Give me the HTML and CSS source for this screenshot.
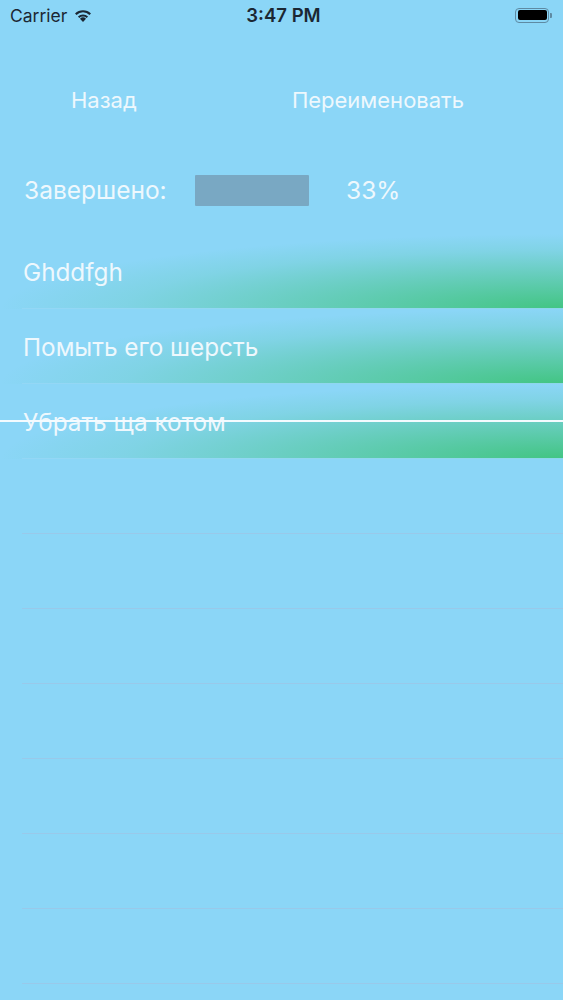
FILE: index.html
```html
<!DOCTYPE html>
<html lang="ru">
<head>
  <meta charset="UTF-8">
  <meta name="viewport" content="width=device-width, initial-scale=1.0">
  <title>Список</title>
  <link rel="stylesheet" href="styles.css">
</head>
<body>
  <div class="status-bar">
    <div class="status-left">
      <span>Carrier</span>
      <svg class="wifi" width="20" height="14" viewBox="0 0 18 13">
        <path d="M9 13 L6.2 9.9 A4.2 4.2 0 0 1 11.8 9.9 Z" fill="#1b2733"/>
        <path d="M4.3 7.9 A6.9 6.9 0 0 1 13.7 7.9 L12.4 9.3 A5 5 0 0 0 5.6 9.3 Z" fill="#1b2733"/>
        <path d="M1.6 5.1 A10.6 10.6 0 0 1 16.4 5.1 L15 6.5 A8.6 8.6 0 0 0 3 6.5 Z" fill="#1b2733"/>
      </svg>
    </div>
    <div class="status-time">3:47 PM</div>
    <div class="status-right">
      <div class="battery"><div class="battery-fill"></div></div>
      <div class="battery-nub"></div>
    </div>
  </div>

  <div class="nav">
    <button class="nav-btn">Назад</button>
    <button class="nav-btn nav-right">Переименовать</button>
  </div>

  <div class="progress-row">
    <span class="progress-label">Завершено:</span>
    <div class="progress-bar"></div>
    <span class="progress-value">33%</span>
  </div>

  <div class="tasks">
    <div class="task filled">Ghddfgh</div>
    <div class="task filled">Помыть его шерсть</div>
    <div class="task filled done">Убрать ща котом</div>
    <div class="task"></div>
    <div class="task"></div>
    <div class="task"></div>
    <div class="task"></div>
    <div class="task"></div>
    <div class="task"></div>
    <div class="task"></div>
  </div>
</body>
</html>
```

FILE: styles.css
```css
* { box-sizing: border-box; margin: 0; padding: 0; }
html, body { height: 100%; }
body {
  font-family: Inter, "Liberation Sans", sans-serif;
  background-color: #8bd6f7;
  color: #eef8fd;
  overflow: hidden;
}

/* status bar */
.status-bar {
  display: grid;
  grid-template-columns: 1fr auto 1fr;
  align-items: center;
  height: 30px;
  padding: 0 10px;
  color: #1b2733;
  font-size: 17.5px;
}
.status-left { display: flex; align-items: center; gap: 6px; }
.status-time { font-weight: 600; font-size: 18.5px; padding-left: 4px; }
.status-right { display: flex; align-items: center; justify-content: flex-end; padding-right: 1px; }
.battery {
  width: 34px;
  height: 15px;
  border: 1.5px solid #5e8aa3;
  border-radius: 4px;
  padding: 1.5px;
}
.battery-fill { width: 100%; height: 100%; background: #000; border-radius: 2px; }
.battery-nub { width: 2px; height: 5px; background: #5e8aa3; border-radius: 0 1px 1px 0; margin-left: 1px; }

/* nav */
.nav {
  display: flex;
  align-items: center;
  margin-top: 56px;
  height: 28px;
  padding-left: 71px;
  padding-right: 99px;
}
.nav-btn {
  background: none;
  border: none;
  color: #eef8fd;
  font-family: inherit;
  font-size: 22px;
}
.nav-right { margin-left: auto; }

/* progress */
.progress-row {
  display: flex;
  align-items: center;
  margin-top: 60px;
  height: 32px;
  padding-left: 24px;
}
.progress-label { width: 171px; font-size: 24.5px; }
.progress-bar {
  width: 114px;
  height: 31px;
  background-color: #79a8c3;
  border-radius: 1px;
}
.progress-value { margin-left: 37px; font-size: 24.5px; }

/* tasks */
.tasks { margin-top: 28px; }
.task {
  position: relative;
  display: flex;
  align-items: center;
  height: 75px;
  padding-left: 23px;
  font-size: 24.3px;
}
.task::after {
  content: "";
  position: absolute;
  left: 22px;
  right: 0;
  bottom: 0;
  height: 1.5px;
  background: rgba(160, 195, 228, 0.7);
}
.task.filled {
  background:
    radial-gradient(ellipse 100% 100% at 100% 100%, rgba(62, 196, 124, 0.95) 0%, rgba(64, 196, 126, 0.55) 40%, rgba(64, 196, 126, 0.15) 78%, rgba(64, 196, 126, 0) 100%);
}
.task.filled::after { background: rgba(150, 215, 245, 0.9); }
.task.done::before {
  content: "";
  position: absolute;
  left: 0;
  right: 0;
  top: 36px;
  height: 2px;
  background: #f4fbff;
}
```
